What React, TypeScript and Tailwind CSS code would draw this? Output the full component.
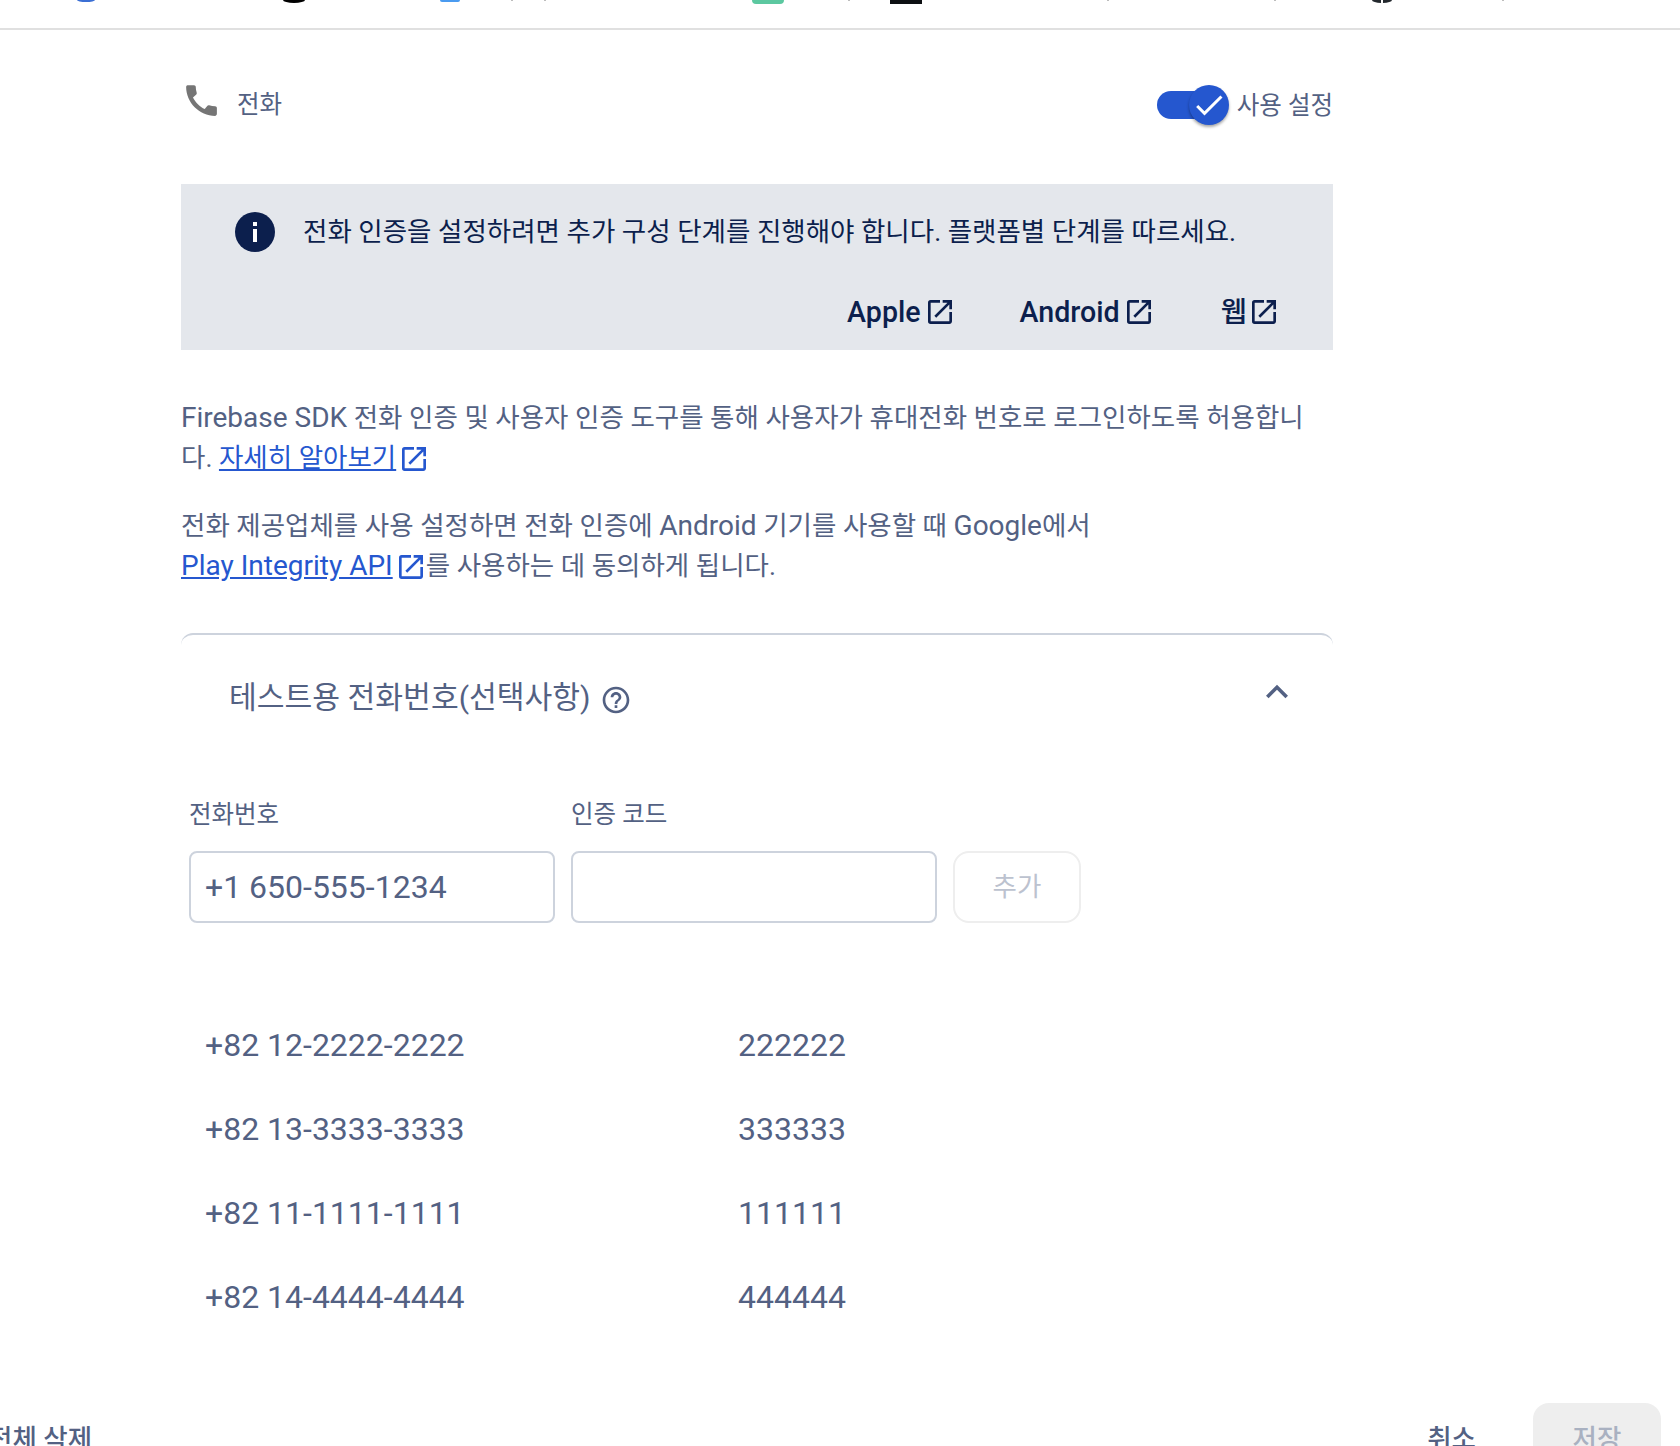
import { MdCall, MdCheck, MdExpandLess, MdHelpOutline, MdOpenInNew } from 'react-icons/md';

const rows = [
  { phone: '+82 12-2222-2222', code: '222222' },
  { phone: '+82 13-3333-3333', code: '333333' },
  { phone: '+82 11-1111-1111', code: '111111' },
  { phone: '+82 14-4444-4444', code: '444444' },
];

const links = [
  { label: 'Apple', className: '', iconClassName: 'ml-[3px]' },
  { label: 'Android', className: 'ml-[64px]', iconClassName: 'ml-[3px]' },
  { label: '웹', className: 'ml-[66px]', iconClassName: 'ml-[1px]' },
];

// bottoms of the provider logos that are scrolled off the top edge
function ClippedLogos() {
  return (
    <div className="flex h-7 items-start border-b-2 border-[#e0e0e0] box-content">
      <div className="ml-[77px] h-[2px] w-[18px] rounded-b-[50%_100%] bg-[#3b6fd4]" />
      <div className="ml-[188px] h-[3px] w-[22px] rounded-b-[50%_100%] bg-black" />
      <div className="ml-[135px] h-[2px] w-[20px] rounded-b-sm bg-[#4a9bf0]" />
      <div className="ml-[51px] h-[1px] w-[2px] bg-[#bdbdbd]" />
      <div className="ml-[31px] h-[1px] w-[2px] bg-[#bdbdbd]" />
      <div className="ml-[206px] h-[4px] w-[32px] rounded-b-[4px] bg-[#5cc8a0]" />
      <div className="ml-[64px] h-[1px] w-[2px] bg-[#bdbdbd]" />
      <div className="ml-[40px] h-[4px] w-[32px] bg-[#0d0f12]" />
      <div className="ml-[185px] h-[1px] w-[2px] bg-[#bdbdbd]" />
      <div className="ml-[165px] h-[1px] w-[2px] bg-[#bdbdbd]" />
      <div className="ml-[96px] flex h-[3px] w-[20px] gap-[2px]">
        <div className="h-full flex-1 rounded-bl-[100%] bg-[#24292e]" />
        <div className="h-full flex-1 rounded-br-[100%] bg-[#24292e]" />
      </div>
      <div className="ml-[110px] h-[1px] w-[2px] bg-[#bdbdbd]" />
    </div>
  );
}

export default function App() {
  return (
    <div className="h-[1446px] overflow-hidden bg-white text-[#536183] [font-family:Roboto,'Noto_Sans_CJK_KR',sans-serif]">
      <ClippedLogos />

      <div className="ml-[181px] w-[1152px]">
        <div className="mt-[55px] flex h-10 items-center justify-between">
          <div className="flex items-center">
            <MdCall size={41} className="-mt-[10px] text-[#757575]" />
            <span className="ml-[15px] text-[24.5px]">전화</span>
          </div>
          <div className="flex items-center">
            <div className="relative h-7 w-[58px] rounded-full bg-[#2557cf]">
              <div className="absolute -top-[6px] left-[32px] flex size-10 items-center justify-center rounded-full bg-[#2557cf] shadow-[0_2px_3px_rgba(0,0,0,0.35)]">
                <MdCheck size={36} className="text-white" />
              </div>
            </div>
            <span className="ml-[22px] mt-[2px] text-[24.5px]">사용 설정</span>
          </div>
        </div>

        <div className="mt-[59px] h-[166px] bg-[#e4e7ec] pt-7 text-[#0c1f4d]">
          <div className="flex pl-[54px]">
            <svg viewBox="0 0 40 40" className="size-10 shrink-0">
              <circle cx="20" cy="20" r="20" fill="#0c1f4d" />
              <rect x="18" y="10" width="4" height="4" fill="#fff" />
              <rect x="18" y="17" width="4" height="13" fill="#fff" />
            </svg>
            <p className="ml-7 text-[26.5px] leading-10">
              전화 인증을 설정하려면 추가 구성 단계를 진행해야 합니다. 플랫폼별 단계를 따르세요.
            </p>
          </div>
          <div className="mt-[40px] flex justify-end pr-[53px]">
            {links.map((link) => (
              <a key={link.label} className={`flex h-10 items-center text-[28.6px] font-medium ${link.className}`}>
                {link.label}
                <MdOpenInNew size={32} className={link.iconClassName} />
              </a>
            ))}
          </div>
        </div>

        <p className="mt-[48px] text-[26.5px] leading-10">
          <span className="text-[28px]">Firebase SDK</span> 전화 인증 및 사용자 인증 도구를 통해 사용자가 휴대전화 번호로 로그인하도록 허용합니
          <br />
          다. <a className="text-[#2557cf] underline">자세히 알아보기</a>
          <MdOpenInNew size={32} className="ml-[2px] inline align-[-8px] text-[#2557cf]" />
        </p>
        <p className="mt-7 text-[26.5px] leading-10">
          전화 제공업체를 사용 설정하면 전화 인증에 <span className="text-[28px]">Android</span> 기기를 사용할 때{' '}
          <span className="text-[28px]">Google</span>에서
          <br />
          <a className="text-[28px] text-[#2557cf] underline">Play Integrity API</a>
          <MdOpenInNew size={32} className="-mr-[1px] ml-[2px] inline align-[-8px] text-[#2557cf]" />를 사용하는 데 동의하게 됩니다.
        </p>

        <div className="mt-[47px] rounded-t-xl border-t-2 border-[#cdd3dd]">
          <div className="flex h-[126px] items-start justify-between pl-12 pr-[34px]">
            <div className="mt-[43px] flex items-center text-[30.2px] leading-10">
              테스트용 전화번호(선택사항)
              <MdHelpOutline size={32} className="ml-[9px] mt-1" />
            </div>
            <MdExpandLess size={44} className="mt-[35px]" />
          </div>

          <div className="ml-2 mt-[38px] flex items-end gap-4">
            <label className="block w-[366px]">
              <span className="block text-[24.5px] leading-8">전화번호</span>
              <input
                readOnly
                placeholder="+1 650-555-1234"
                className="mt-[20px] block h-[72px] w-full rounded-lg border-2 border-[#cdd3dd] px-[14px] text-[32px] outline-none placeholder:text-[#536183]"
              />
            </label>
            <label className="block w-[366px]">
              <span className="block text-[24.5px] leading-8">인증 코드</span>
              <input
                readOnly
                className="mt-[20px] block h-[72px] w-full rounded-lg border-2 border-[#cdd3dd] outline-none"
              />
            </label>
            <button className="h-[72px] w-32 rounded-2xl border-2 border-[#eeeeee] text-[26.5px] text-[#bcc2cf]">
              추가
            </button>
          </div>

          <div className="ml-2 mt-[80px]">
            {rows.map((row) => (
              <div key={row.code} className="grid h-[84px] grid-cols-[533px_1fr] items-center pl-4 text-[32px]">
                <span>{row.phone}</span>
                <span>{row.code}</span>
              </div>
            ))}
          </div>
        </div>
      </div>

      <div className="mt-[64px] flex items-center justify-between pr-[19px] text-[26.5px] font-medium">
        <a className="-ml-[12px]">전체 삭제</a>
        <div className="flex items-center">
          <a>취소</a>
          <button className="ml-[57px] h-[72px] w-32 rounded-2xl bg-[#eeeeee] text-[#a9b1c1]">저장</button>
        </div>
      </div>
    </div>
  );
}
